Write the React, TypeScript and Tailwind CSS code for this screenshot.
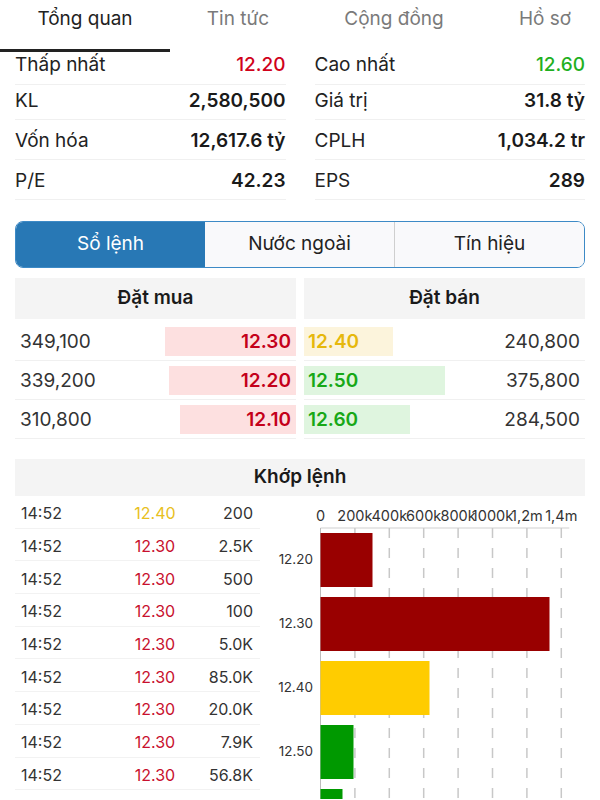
import React from "react";

const tabs = [
  { label: "Tổng quan", w: "w-[170px]", active: true },
  { label: "Tin tức", w: "w-[136px]", active: false },
  { label: "Cộng đồng", w: "w-[176px]", active: false },
  { label: "Hồ sơ", w: "w-[126px]", active: false },
];

const stats = [
  [
    { label: "Thấp nhất", value: "12.20", cls: "text-[#d0021b] font-medium" },
    { label: "Cao nhất", value: "12.60", cls: "text-[#1fb01f] font-medium" },
  ],
  [
    { label: "KL", value: "2,580,500", cls: "text-[#1a1a1a] font-semibold" },
    { label: "Giá trị", value: "31.8 tỷ", cls: "text-[#1a1a1a] font-semibold" },
  ],
  [
    { label: "Vốn hóa", value: "12,617.6 tỷ", cls: "text-[#1a1a1a] font-semibold" },
    { label: "CPLH", value: "1,034.2 tr", cls: "text-[#1a1a1a] font-semibold" },
  ],
  [
    { label: "P/E", value: "42.23", cls: "text-[#1a1a1a] font-semibold" },
    { label: "EPS", value: "289", cls: "text-[#1a1a1a] font-semibold" },
  ],
];

const bids = [
  { vol: "349,100", price: "12.30", w: 131 },
  { vol: "339,200", price: "12.20", w: 127 },
  { vol: "310,800", price: "12.10", w: 116 },
];

const asks = [
  { vol: "240,800", price: "12.40", w: 89, bar: "bg-[#fcf4dc]", text: "text-[#e6b80c]" },
  { vol: "375,800", price: "12.50", w: 141, bar: "bg-[#dff5df]", text: "text-[#17a817]" },
  { vol: "284,500", price: "12.60", w: 106, bar: "bg-[#dff5df]", text: "text-[#17a817]" },
];

const trades = [
  { price: "12.40", vol: "200", yellow: true },
  { price: "12.30", vol: "2.5K" },
  { price: "12.30", vol: "500" },
  { price: "12.30", vol: "100" },
  { price: "12.30", vol: "5.0K" },
  { price: "12.30", vol: "85.0K" },
  { price: "12.30", vol: "20.0K" },
  { price: "12.30", vol: "7.9K" },
  { price: "12.30", vol: "56.8K" },
];

const ticks = ["0", "200k", "400k", "600k", "800k", "1000k", "1,2m", "1,4m"];
// bar widths in px on the chart scale (34.4px per 200k)
const bars = [
  { label: "12.20", w: 52, color: "#990000" },
  { label: "12.30", w: 229, color: "#990000" },
  { label: "12.40", w: 109, color: "#ffcc00" },
  { label: "12.50", w: 33, color: "#009900" },
  { label: "", w: 22, color: "#009900" },
];

function VolumeChart() {
  const x0 = 60.5;
  const step = 34.4;
  const top = 32;
  return (
    <svg width="340" height="303" className="block">
      {ticks.map((t, i) => (
        <text
          key={t}
          x={x0 + i * step}
          y={25}
          textAnchor="middle"
          fontSize="14.5"
          fill="#333"
          fontFamily="Inter, sans-serif"
        >
          {t}
        </text>
      ))}
      <line x1={x0} y1={top} x2={x0 + 7 * step + 8} y2={top} stroke="#cfcfcf" strokeWidth="1" />
      {ticks.slice(1).map((t, i) => (
        <line
          key={t}
          x1={x0 + (i + 1) * step}
          y1={top}
          x2={x0 + (i + 1) * step}
          y2={303}
          stroke="#c8c8c8"
          strokeWidth="1.5"
          strokeDasharray="10 10"
        />
      ))}
      <line x1={x0} y1={top} x2={x0} y2={303} stroke="#bdbdbd" strokeWidth="1" />
      {bars.map((b, i) => (
        <g key={i}>
          <rect x={x0} y={top + i * 64 + 5} width={b.w} height={54} fill={b.color} />
          {b.label && (
            <text
              x={53}
              y={top + i * 64 + 32}
              textAnchor="end"
              dominantBaseline="middle"
              fontSize="13.5"
              fill="#333"
              fontFamily="Inter, sans-serif"
            >
              {b.label}
            </text>
          )}
        </g>
      ))}
    </svg>
  );
}

export default function App() {
  return (
    <div className="w-[600px] h-[800px] overflow-hidden bg-white font-['Inter',sans-serif] text-[#222]">
      {/* Top tabs */}
      <div className="relative z-10 flex h-[52px] bg-white">
        {tabs.map((t) => (
          <div key={t.label} className={`${t.w} shrink-0 relative flex items-start justify-center pt-[6px]`}>
            <span className={`text-[19px] leading-[26px] ${t.active ? "text-[#222]" : "text-[#7a7a7a]"}`}>
              {t.label}
            </span>
            {t.active && <div className="absolute left-0 right-0 bottom-0 h-[3px] bg-[#222]" />}
          </div>
        ))}
      </div>

      {/* Stats */}
      <div className="flex flex-col px-[15px]">
        {stats.map((row, ri) => (
          <div key={ri} className={`grid grid-cols-2 gap-x-[29px] ${ri === 0 ? "h-[28px]" : "h-[40px]"}`}>
            {row.map((c) => (
              <div
                key={c.label}
                className={`flex justify-between border-b border-[#f0f0f0] ${ri === 0 ? "items-end pb-[6px]" : "items-center pt-[2px]"}`}
              >
                <span className="text-[19px] leading-[26px] text-[#222]">{c.label}</span>
                <span className={`text-[19px] leading-[26px] ${c.cls}`}>{c.value}</span>
              </div>
            ))}
          </div>
        ))}
      </div>

      {/* Segmented control */}
      <div className="mx-[15px] mt-[21px] flex h-[47px] rounded-[8px] border-[1.5px] border-[#3d8ac6] overflow-hidden">
        <div className="flex-1 flex items-center justify-center bg-[#2878b5] text-white text-[19px]">Sổ lệnh</div>
        <div className="flex-1 flex items-center justify-center bg-[#f9f9fb] text-[#222] text-[19px]">Nước ngoài</div>
        <div className="flex-1 flex items-center justify-center bg-[#f9f9fb] text-[#222] text-[19px] border-l border-[#cfcfcf]">
          Tín hiệu
        </div>
      </div>

      {/* Order book */}
      <div className="mx-[15px] mt-[10px] grid grid-cols-2 gap-x-[8px]">
        <div>
          <div className="h-[41px] bg-[#f4f4f4] flex items-center justify-center text-[19px] font-semibold text-[#1a1a1a]">
            Đặt mua
          </div>
          <div className="mt-[3px]">
            {bids.map((b) => (
              <div key={b.price} className="relative h-[39px] flex items-center pt-[3px] border-b border-[#f0f0f0]">
                <div className="absolute right-0 top-[5px] h-[29px] bg-[#fde0e0]" style={{ width: b.w }} />
                <span className="relative pl-[5px] text-[19px] text-[#333]">{b.vol}</span>
                <span className="relative ml-auto pr-[5px] text-[19px] font-semibold text-[#c4001a]">{b.price}</span>
              </div>
            ))}
          </div>
        </div>
        <div>
          <div className="h-[41px] bg-[#f4f4f4] flex items-center justify-center text-[19px] font-semibold text-[#1a1a1a]">
            Đặt bán
          </div>
          <div className="mt-[3px]">
            {asks.map((a) => (
              <div key={a.price} className="relative h-[39px] flex items-center pt-[3px] border-b border-[#f0f0f0]">
                <div className={`absolute left-0 top-[5px] h-[29px] ${a.bar}`} style={{ width: a.w }} />
                <span className={`relative pl-[4px] text-[19px] font-semibold ${a.text}`}>{a.price}</span>
                <span className="relative ml-auto pr-[5px] text-[19px] text-[#333]">{a.vol}</span>
              </div>
            ))}
          </div>
        </div>
      </div>

      {/* Matched orders */}
      <div className="mx-[15px] mt-[20px] h-[37px] bg-[#f4f4f4] flex items-center justify-center text-[19px] font-semibold text-[#1a1a1a]">
        Khớp lệnh
      </div>
      <div className="flex">
        <div className="ml-[15px] w-[245px] shrink-0">
          {trades.map((t, i) => (
            <div key={i} className="h-[32.7px] flex items-center border-b border-[#f2f2f2] text-[16px] pt-[3px]">
              <span className="w-[110px] pl-[6px] text-[#333]">14:52</span>
              <span className={`w-[60px] text-center ${t.yellow ? "text-[#e8c020]" : "text-[#c8102e]"}`}>{t.price}</span>
              <span className="flex-1 text-right pr-[7px] text-[#333]">{t.vol}</span>
            </div>
          ))}
        </div>
        <VolumeChart />
      </div>
    </div>
  );
}
